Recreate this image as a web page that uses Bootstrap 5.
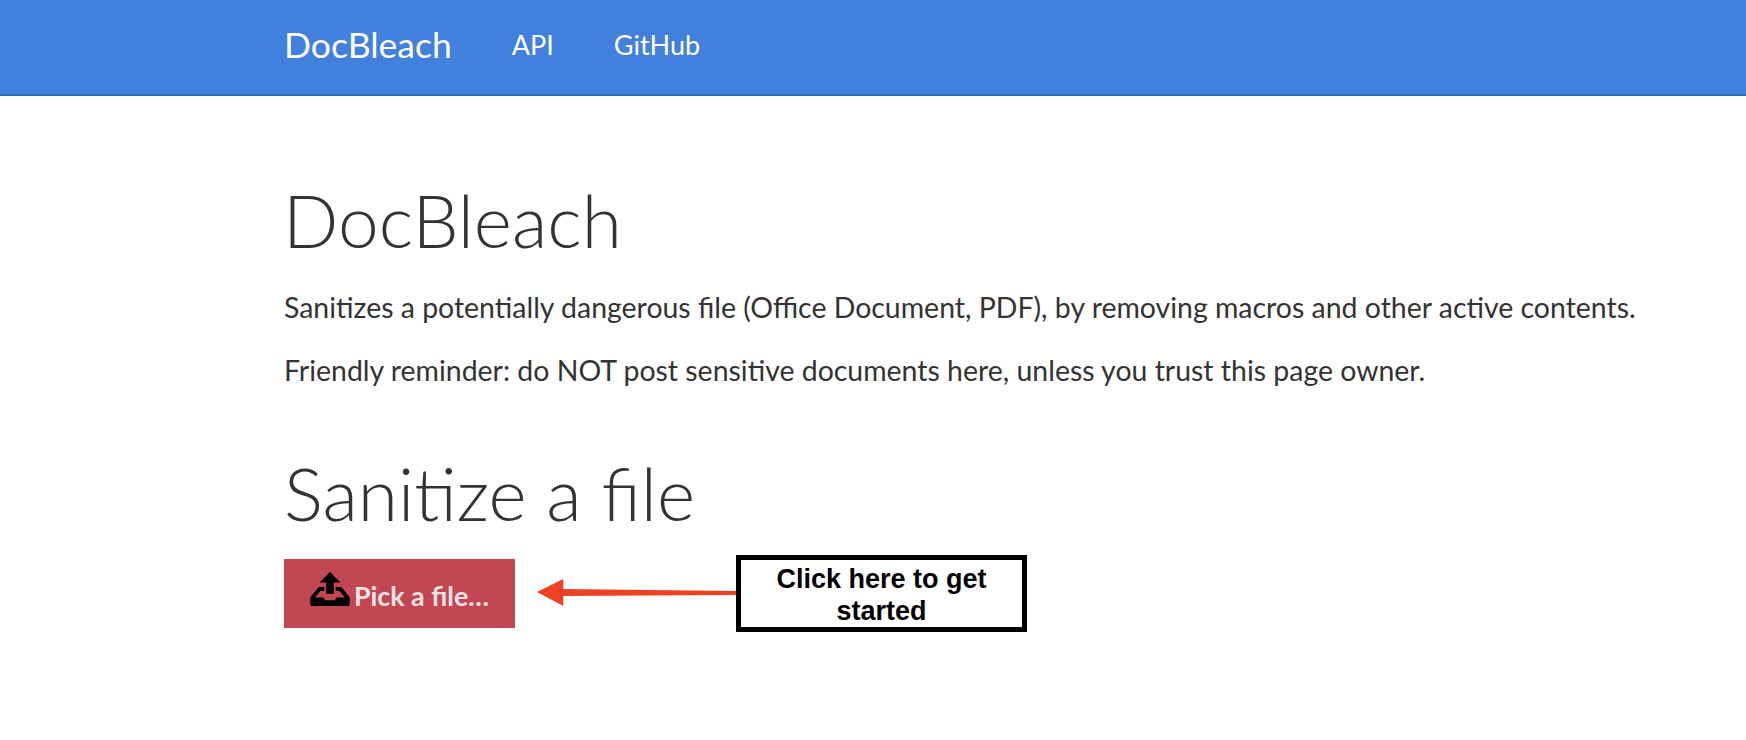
<!doctype html>
<html lang="en"><head><meta charset="utf-8"><title>DocBleach</title>
<link href="https://cdn.jsdelivr.net/npm/bootstrap@5.3.0/dist/css/bootstrap.min.css" rel="stylesheet">
<style>
body{font-family:"Lato","Noto Sans",sans-serif;color:#333;background:#fff}
.db-bar{background:#4180dc;border-bottom:2px solid #2f6cb5;height:96px;padding:0 0 4px}
.db-wrap{width:1440px;margin-left:269px;padding:0 15px}
.db-brand{font-size:35.5px;color:#fff;font-weight:400;padding:0;margin-right:60px}
.db-brand:hover,.db-link:hover{color:#fff}
.db-link{font-size:27px;color:#fff;padding:0;margin-right:60px}
.db-h1{font-size:73px;font-weight:300;line-height:1.1;margin:84px 0 29px -1px;color:#333}
.db-p{font-size:28.45px;line-height:36px;margin:0 0 27px;color:#333}
.db-h2{font-size:73px;font-weight:300;line-height:1.1;margin:65px 0 21px;color:#333}
.db-btn{width:231px;height:69px;background:#c34753;border:1px solid #c34753;border-radius:0;color:#f3e3e5;font-weight:700;font-size:26.8px;padding:0}
.db-btn:hover{background:#c34753;color:#f3e3e5}
.db-ico{width:40px;height:34px;margin-top:-9px}
.db-lbl{margin-top:6px}
.db-note{width:291px;height:77px;padding-top:4px;border:5px solid #000;font-family:"Liberation Sans",sans-serif;font-weight:700;font-size:27px;line-height:32px;color:#000;text-align:center}
.db-arrow{width:199px;height:30px;margin-left:22px}
</style></head><body>
<nav class="navbar db-bar"><div class="db-wrap d-flex align-items-center">
<a class="navbar-brand db-brand" href="#">DocBleach</a>
<a class="nav-link db-link" href="#">API</a>
<a class="nav-link db-link" href="#">GitHub</a>
</div></nav>
<main class="db-wrap">
<h1 class="db-h1">DocBleach</h1>
<p class="db-p">Sanitizes a potentially dangerous file (Office Document, PDF), by removing macros and other active contents.</p>
<p class="db-p">Friendly reminder: do NOT post sensitive documents here, unless you trust this page owner.</p>
<h2 class="db-h2">Sanitize a file</h2>
<div class="d-flex align-items-center">
<button class="btn db-btn d-flex align-items-center justify-content-center gap-1" type="button">
<svg class="db-ico" viewBox="0 0 42 36" aria-hidden="true"><path fill="#000" d="M21 0 32 11H25V23H17V11H10Z"/><path fill="#000" d="M9 16h6v4H11L5 27H14L16 30H26L28 27H37L31 20H27V16H33L42 27V33A3 3 0 0 1 39 36H3A3 3 0 0 1 0 33V27Z"/></svg>
<span class="db-lbl">Pick a file…</span></button>
<svg class="db-arrow" viewBox="0 0 197 30" preserveAspectRatio="none" aria-hidden="true"><path fill="#ee4122" d="M0 14 26 1V11L197 13V17L26 18V28Z"/></svg>
<div class="db-note d-flex align-items-center justify-content-center">Click here to get started</div>
</div>
</main>
</body></html>
